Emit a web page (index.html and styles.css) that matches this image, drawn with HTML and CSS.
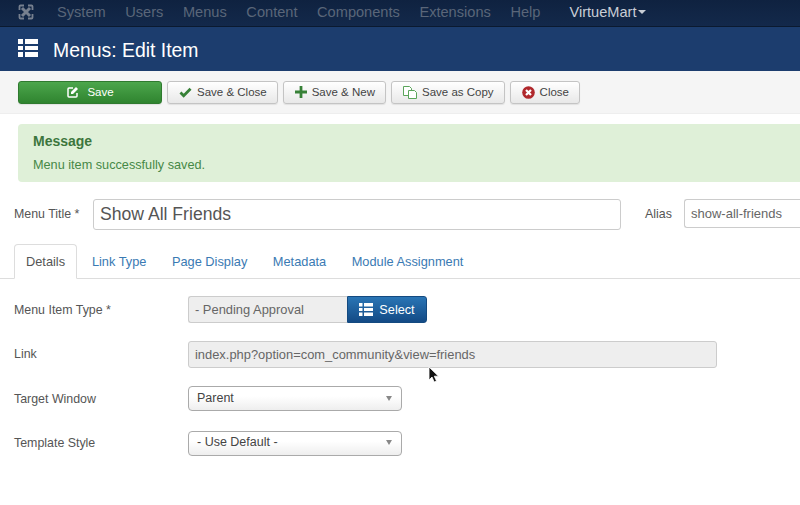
FILE: index.html
```html
<!DOCTYPE html>
<html lang="en">
<head>
<meta charset="utf-8">
<title>Menus: Edit Item</title>
<link rel="stylesheet" href="styles.css">
</head>
<body>
<nav class="topbar">
  <svg class="joomla" width="18" height="18" viewBox="0 0 18 18"><g fill="none" stroke="#77808f"><path stroke-width="3" d="M5 5l8 8M13 5l-8 8"/><path stroke-width="1.800" d="M2.500 7V3.500a1 1 0 0 1 1-1H7M11 2.500h3.500a1 1 0 0 1 1 1V7M15.500 11v3.500a1 1 0 0 1-1 1H11M7 15.500H3.500a1 1 0 0 1-1-1V11"/></g></svg>
  <span class="nav-item">System</span>
  <span class="nav-item">Users</span>
  <span class="nav-item">Menus</span>
  <span class="nav-item">Content</span>
  <span class="nav-item">Components</span>
  <span class="nav-item">Extensions</span>
  <span class="nav-item nav-help">Help</span>
  <span class="nav-item nav-vm">VirtueMart<i class="caret"></i></span>
</nav>
<header class="titlebar">
  <svg class="list-icon" width="20" height="20" viewBox="0 0 20 20"><path fill="#fff" d="M0 1h5v5H0zM7 1h13v5H7zM0 8h5v4H0zM7 8h13v4H7zM0 14h5v5H0zM7 14h13v5H7z"/></svg>
  <h1>Menus: Edit Item</h1>
</header>
<div class="toolbar">
  <button class="btn btn-save"><svg width="12" height="12" viewBox="0 0 12 12"><path fill="none" stroke="#fff" stroke-width="1.500" d="M10 7v3a1 1 0 0 1-1 1H2a1 1 0 0 1-1-1V3a1 1 0 0 1 1-1h4"/><path fill="#fff" d="M4 6l5-5 2 2-5 5H4z"/></svg>Save</button>
  <button class="btn"><svg width="13" height="11" viewBox="0 0 14 12"><path fill="none" stroke="#378137" stroke-width="3" d="M1.500 6l3.500 3.500 7.500-7.500"/></svg>Save &amp; Close</button>
  <button class="btn"><svg width="12" height="12" viewBox="0 0 13 13"><path fill="#378137" d="M5 0h3v5h5v3H8v5H5V8H0V5h5z"/></svg>Save &amp; New</button>
  <button class="btn"><svg width="14" height="13" viewBox="0 0 14 13"><path fill="#fff" stroke="#5aa55a" d="M.5.500h6l2 2v7h-8z"/><path fill="#fff" stroke="#5aa55a" d="M5.500 4.500h6l2 2v6h-8z"/></svg>Save as Copy</button>
  <button class="btn"><svg width="13" height="13" viewBox="0 0 13 13"><circle cx="6.500" cy="6.500" r="6.300" fill="#b0282c"/><path stroke="#fff" stroke-width="2.200" d="M4 4l5 5M9 4l-5 5"/></svg>Close</button>
</div>
<main class="content">
  <section class="alert">
    <h4>Message</h4>
    <p>Menu item successfully saved.</p>
  </section>
  <div class="title-row">
    <label class="title-label">Menu Title *</label>
    <div class="title-input">Show All Friends</div>
    <label class="alias-label">Alias</label>
    <div class="alias-input">show-all-friends</div>
  </div>
  <div class="tabs">
    <span class="tab active">Details</span>
    <span class="tab">Link Type</span>
    <span class="tab">Page Display</span>
    <span class="tab">Metadata</span>
    <span class="tab">Module Assignment</span>
  </div>
  <div class="form">
    <div class="row">
      <label>Menu Item Type *</label>
      <div class="group">
        <div class="field readonly short">- Pending Approval</div>
        <button class="select-btn"><svg width="14" height="13" viewBox="0 0 14 13"><path fill="#fff" d="M0 0h3.500v3.500H0zM5 0h9v3.500H5zM0 5h3.500v3H0zM5 5h9v3H5zM0 9.500h3.500V13H0zM5 9.500h9V13H5z"/></svg>Select</button>
      </div>
    </div>
    <div class="row">
      <label>Link</label>
      <div class="field readonly long">index.php?option=com_community&amp;view=friends</div>
    </div>
    <div class="row">
      <label>Target Window</label>
      <div class="dropdown"><span>Parent</span><i class="arrow"></i></div>
    </div>
    <div class="row">
      <label>Template Style</label>
      <div class="dropdown"><span>- Use Default -</span><i class="arrow"></i></div>
    </div>
  </div>
</main>
<svg class="cursor" width="12" height="18" viewBox="0 0 12 18"><path fill="#111" stroke="#fff" stroke-width=".8" d="M1 1v13l3-3 2.200 5 2.300-1-2.200-4.800H10.500z"/></svg>
</body>
</html>
```
FILE: styles.css
```css
* { box-sizing: border-box; }
html, body { margin: 0; padding: 0; }
body { width: 800px; height: 505px; overflow: hidden; background: #fff; font-family: "Liberation Sans", Arial, sans-serif; font-size: 13px; color: #555; position: relative; }
.topbar { height: 27px; display: flex; align-items: center; padding-left: 17px; background: linear-gradient(#0f2240, #13294b); border-bottom: 1px solid #0b1a30; font-size: 14.600px; color: #5a6679; white-space: nowrap; overflow: hidden; }
.joomla { flex: none; margin-right: 22px; margin-top: -3px; }
.nav-item { margin-right: 19.600px; margin-top: -3px; }
.nav-help { margin-right: 29px; }
.nav-vm { color: #c9ced6; display: flex; align-items: center; }
.caret { width: 0; height: 0; margin-left: 2px; border: 4px solid transparent; border-top-color: #c9ced6; border-bottom: 0; }
.titlebar { height: 44px; background: #1c3d6e; display: flex; align-items: center; padding-left: 18px; color: #fff; }
.titlebar h1 { margin: 2px 0 0 15px; font-size: 19.400px; font-weight: 400; line-height: 42px; }
.list-icon { margin-top: -3px; }
.toolbar { height: 43px; background: #f5f5f5; border-bottom: 1px solid #eee; display: flex; align-items: center; gap: 5px; padding: 0 0 0 18px; }
.btn { height: 23px; padding: 0 10px 0 11px; display: flex; align-items: center; gap: 5px; font: 11.500px "Liberation Sans", Arial, sans-serif; color: #444; background: linear-gradient(#fff, #e8e8e8); border: 1px solid #c4c4c4; border-radius: 3px; box-shadow: 0 1px 1px rgba(0,0,0,.08); white-space: nowrap; }
.btn-save { width: 144px; justify-content: center; gap: 8px; color: #fff; background: linear-gradient(#4ca64c, #2f842f); border-color: #2f7a2f; }
.content { padding: 10px 0 0 0; }
.alert { margin: 0 0 0 18px; height: 58px; padding: 9px 15px; background: #dff0d8; border-radius: 4px 0 0 4px; color: #468847; }
.alert h4 { margin: 0; font-size: 14px; line-height: 16px; font-weight: 700; color: #3c763d; }
.alert p { margin: 8px 0 0; font-size: 12.700px; line-height: 16px; }
.title-row { display: flex; align-items: center; margin-top: 17px; padding-left: 14px; white-space: nowrap; }
.title-label { width: 79px; flex: none; margin-top: -2px; font-size: 12.400px; }
.title-input { flex: none; width: 528px; height: 31px; border: 1px solid #ccc; border-radius: 3px; padding: 0 6px; font-size: 17.600px; line-height: 29px; color: #555; }
.alias-label { flex: none; margin-left: 24px; margin-top: -2px; width: 39px; font-size: 12.400px; }
.alias-input { flex: none; width: 130px; height: 29px; margin-top: -2px; border: 1px solid #ccc; border-radius: 3px 0 0 3px; border-right: 0; padding: 0 6px; font-size: 13px; line-height: 27px; color: #666; }
.tabs { display: flex; margin-top: 14px; padding-left: 14px; height: 35px; border-bottom: 1px solid #ddd; font-size: 12.800px; color: #3a7ab3; }
.tab { height: 35px; padding: 0 12.750px; line-height: 36px; }
.tab.active { padding: 0 11px; margin-right: 2px; color: #555; background: #fff; border: 1px solid #ddd; border-bottom-color: #fff; border-radius: 4px 4px 0 0; line-height: 34px; }
.form { padding: 17px 0 0 14px; font-size: 12.400px; }
.row { display: flex; align-items: center; height: 27px; margin-bottom: 17.500px; }
.row label { width: 174px; flex: none; }
.group { display: flex; }
.field { height: 27px; line-height: 25px; padding: 0 6px; border: 1px solid #ccc; font-size: 12.900px; }
.readonly { background: #eee; color: #666; border-radius: 3px; }
.short { width: 159px; border-radius: 3px 0 0 3px; border-right: 0; }
.long { width: 529px; }
.select-btn { width: 80px; height: 27px; display: flex; align-items: center; justify-content: center; gap: 6px; font: 12.700px "Liberation Sans", Arial, sans-serif; color: #fff; background: linear-gradient(#2a75b5, #134a85); border: 1px solid #144a80; border-radius: 0 3px 3px 0; padding: 0; }
.dropdown { width: 214px; height: 25px; display: flex; align-items: center; justify-content: space-between; padding: 0 9px 0 8px; border: 1px solid #aaa; border-radius: 4px; background: linear-gradient(#fff 40%, #eee); color: #444; font-size: 12.500px; }
.dropdown span { margin-top: -2px; }
.arrow { width: 0; height: 0; border: 3.500px solid transparent; border-top: 5px solid #888; border-bottom: 0; margin-top: -1px; }
.cursor { position: absolute; left: 428px; top: 366px; }
```
